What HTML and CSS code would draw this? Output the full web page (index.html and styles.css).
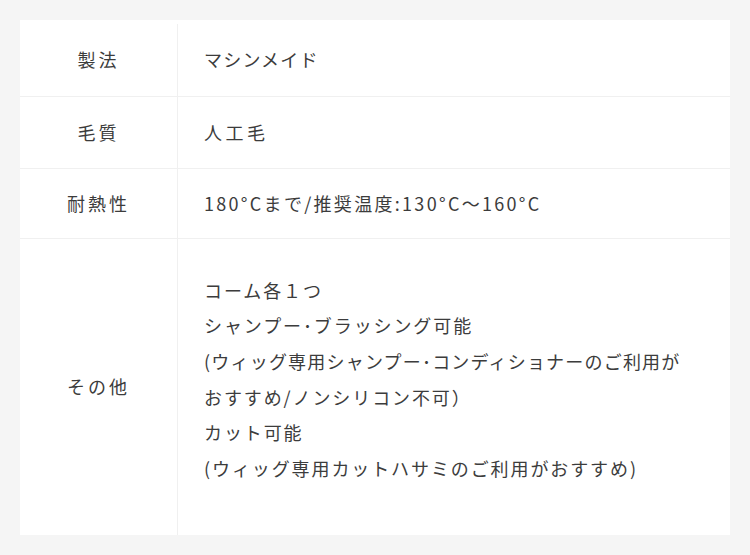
FILE: index.html
```html
<!DOCTYPE html>
<html lang="ja">
<head>
<meta charset="utf-8">
<link rel="stylesheet" href="styles.css">
</head>
<body>
<div class="spec">
  <div class="row r1">
    <div class="label">製法</div>
    <div class="value">マシンメイド</div>
  </div>
  <div class="row r2">
    <div class="label">毛質</div>
    <div class="value">人工毛</div>
  </div>
  <div class="row r3">
    <div class="label">耐熱性</div>
    <div class="value">180°Cまで/推奨温度:130°C〜160°C</div>
  </div>
  <div class="row r4">
    <div class="label">その他</div>
    <div class="value">コーム各１つ<br>シャンプー･ブラッシング可能<br><span class="tight">(ウィッグ専用シャンプー･コンディショナーのご利用が</span><br>おすすめ/ノンシリコン不可）<br>カット可能<br>(ウィッグ専用カットハサミのご利用がおすすめ)</div>
  </div>
</div>
</body>
</html>
```
FILE: styles.css
```css
html, body {
  margin: 0;
  padding: 0;
  background: #f5f5f5;
}
body {
  padding: 20px;
  font-family: "Noto Sans CJK JP", "Noto Sans", sans-serif;
  color: #3c3c3c;
  font-size: 18px;
  line-height: 35.6px;
}
.spec {
  background: #fff;
  width: 710px;
  height: 515px;
  box-sizing: border-box;
  padding-top: 4px;
  display: flex;
  flex-direction: column;
}
.row {
  display: flex;
  border-bottom: 1px solid #f0f0f0;
}
.row.r4 {
  border-bottom: none;
  flex: 1;
}
.label {
  width: 157px;
  flex: none;
  border-right: 1px solid #f0f0f0;
  display: flex;
  align-items: center;
  justify-content: center;
  letter-spacing: 3px;
}
.value {
  flex: 1;
  padding: 18px 0 18px 26px;
  letter-spacing: 1.9px;
}
.r1 .value {
  letter-spacing: 1.2px;
}
.r2 .value {
  letter-spacing: 3.5px;
}
.r3 .value {
  padding-top: 17px;
  padding-bottom: 16px;
  letter-spacing: 2.3px;
}
.r4 .value {
  padding-top: 34px;
  padding-bottom: 48px;
}
.tight {
  letter-spacing: 1.2px;
}
```
